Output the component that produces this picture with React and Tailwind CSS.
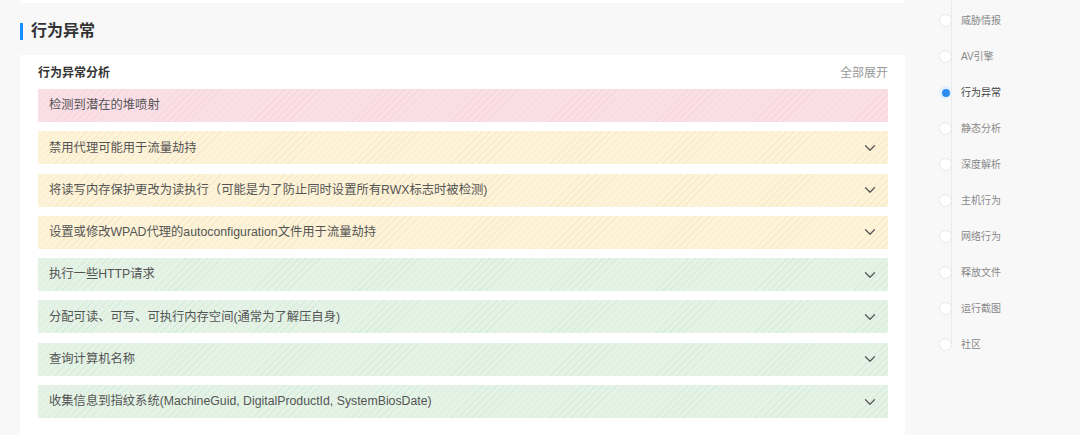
import { ChevronDown } from "lucide-react";

const rows = [
  { text: "检测到潜在的堆喷射", tone: "red", arrow: false },
  { text: "禁用代理可能用于流量劫持", tone: "yellow", arrow: true },
  { text: "将读写内存保护更改为读执行（可能是为了防止同时设置所有RWX标志时被检测)", tone: "yellow", arrow: true },
  { text: "设置或修改WPAD代理的autoconfiguration文件用于流量劫持", tone: "yellow", arrow: true },
  { text: "执行一些HTTP请求", tone: "green", arrow: true },
  { text: "分配可读、可写、可执行内存空间(通常为了解压自身)", tone: "green", arrow: true },
  { text: "查询计算机名称", tone: "green", arrow: true },
  { text: "收集信息到指纹系统(MachineGuid, DigitalProductId, SystemBiosDate)", tone: "green", arrow: true },
];

const toneClass = {
  red: "bg-[repeating-linear-gradient(-45deg,#fbdfe7_0px,#fbdfe7_4px,#f7d6e0_4px,#f7d6e0_5px)]",
  yellow: "bg-[repeating-linear-gradient(-45deg,#fdf3d8_0px,#fdf3d8_4px,#f9ebc9_4px,#f9ebc9_5px)]",
  green: "bg-[repeating-linear-gradient(-45deg,#e4f3e6_0px,#e4f3e6_4px,#d9eddc_4px,#d9eddc_5px)]",
};

const nav = ["威胁情报", "AV引擎", "行为异常", "静态分析", "深度解析", "主机行为", "网络行为", "释放文件", "运行截图", "社区"];

export default function App() {
  return (
    <div className="w-[1080px] h-[435px] overflow-hidden bg-[#f8f8f9] flex font-['Liberation_Sans','Noto_Sans_CJK_SC',sans-serif]">
      <div className="w-[905px] pl-5 flex flex-col">
        <div className="h-[3px] bg-white" />
        <div className="h-[52px] flex items-center pt-[4px]">
          <div className="w-[3px] h-[17px] bg-[#1890ff]" />
          <h2 className="ml-2 text-[16px] font-bold text-[#333]">行为异常</h2>
        </div>
        <div className="flex-1 bg-white pl-[18px] pr-[17px]">
          <div className="h-[34px] flex items-center justify-between pt-[2px]">
            <span className="text-[12px] font-bold text-[#333]">行为异常分析</span>
            <span className="text-[12px] text-[#999]">全部展开</span>
          </div>
          <div className="flex flex-col gap-[9.3px]">
            {rows.map((r) => (
              <div key={r.text} className={`h-[33px] flex items-center justify-between pl-[11px] pr-[9px] ${toneClass[r.tone]}`}>
                <span className="text-[12.3px] text-[#555]">{r.text}</span>
                {r.arrow && <ChevronDown className="w-[18px] h-[18px] text-[#555]" strokeWidth={1.6} />}
              </div>
            ))}
          </div>
        </div>
      </div>
      <div className="flex-1 relative pl-[34px]">
        <div className="absolute left-[46px] top-0 h-[345px] w-px bg-[#e8eaec]" />
        <div className="flex flex-col pt-[14px]">
          {nav.map((n, i) => (
            <div key={n} className="relative h-[36px] flex items-start">
              {i === 2 ? (
                <div className="w-[13px] h-[13px] rounded-full bg-[#e3f0fd] flex items-center justify-center">
                  <div className="w-[8px] h-[8px] rounded-full bg-[#2d8cf0]" />
                </div>
              ) : (
                <div className="w-[13px] h-[13px] rounded-full bg-white border border-[#e4e7ed]" />
              )}
              <span className={`ml-[9px] text-[10px] leading-[13px] ${i === 2 ? "text-[#444]" : "text-[#888]"}`}>{n}</span>
            </div>
          ))}
        </div>
      </div>
    </div>
  );
}
